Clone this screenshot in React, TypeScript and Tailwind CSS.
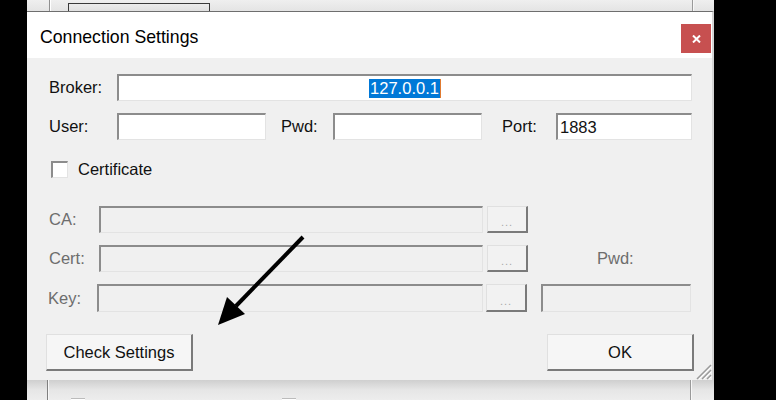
import React from 'react';

const sunken =
  'border-t-2 border-l-2 border-r border-b border-t-[#8c8c8c] border-l-[#8c8c8c] border-r-[#e3e3e3] border-b-[#e3e3e3]';
const raised =
  'border-t border-l border-r-2 border-b-2 border-t-[#e0e0e0] border-l-[#e0e0e0] border-r-[#7a7a7a] border-b-[#7a7a7a]';

function Field({ w, h = 27, disabled, children }: { w: number; h?: number; disabled?: boolean; children?: React.ReactNode }) {
  return (
    <div
      className={`${sunken} flex items-center shrink-0 ${disabled ? 'bg-[#f0f0f0]' : 'bg-white'}`}
      style={{ width: w, height: h }}
    >
      {children}
    </div>
  );
}

function Browse({ h = 27 }: { h?: number }) {
  return (
    <div className={`${raised} bg-[#f2f2f2] w-[41px] flex items-end justify-center pb-[3px] text-[11px] leading-none text-[#a8a8a8] tracking-[1px]`} style={{ height: h }}>
      ...
    </div>
  );
}

function Arrow() {
  return (
    <svg className="absolute left-0 top-0 pointer-events-none" width="776" height="400" viewBox="0 0 776 400">
      <line x1="303" y1="237" x2="236" y2="306" stroke="#000" strokeWidth="4" />
      <polygon points="218,325 227,297 245,314" fill="#000" />
    </svg>
  );
}

export default function App() {
  return (
    <div className="relative w-[776px] h-[400px] overflow-hidden bg-black flex font-['Liberation_Sans',Arial,sans-serif] text-[16.5px] text-[#111]">
      <div className="w-[27px] shrink-0" />

      <div className="w-[687px] shrink-0 flex flex-col">
        {/* window behind, top edge */}
        <div className="h-[11px] flex bg-gradient-to-b from-[#efefef] to-[#e4e4e4]">
          <div className="w-[22px]" />
          <div className="w-px bg-[#8f8f8f]" />
          <div className="w-px bg-white" />
          <div className="w-[17px]" />
          <div className="w-[142px] mt-[3px] border border-b-0 border-[#3a3a3a] bg-gradient-to-b from-[#ececec] to-[#e0e0e0]" />
          <div className="flex-1" />
          <div className="w-px bg-[#9a9a9a]" />
          <div className="w-px bg-[#f7f7f7]" />
          <div className="w-[20px]" />
        </div>

        {/* dialog */}
        <div className="h-[369px] flex flex-col border-t border-[#6e6e6e] border-r-2 border-r-[#d4d4d4] relative">
          <div className="h-[46px] bg-white flex items-start justify-between">
            <div className="pl-[13px] pt-[13px] text-[17.7px] leading-[24px] text-black">Connection Settings</div>
            <div className="mt-[12px] mr-px w-[30px] h-[29px] bg-[#c75050] flex items-center justify-center">
              <svg width="9" height="8" viewBox="0 0 9 8">
                <path d="M1 0.5 L8 7.5 M8 0.5 L1 7.5" stroke="#fff" strokeWidth="2" />
              </svg>
            </div>
          </div>

          <div className="flex-1 bg-[#f0f0f0] pl-[22px] pt-[16px] flex flex-col relative">
            {/* broker */}
            <div className="flex items-center h-[27px]">
              <div className="w-[68px]">Broker:</div>
              <Field w={575}>
                <div className="flex-1 flex justify-center">
                  <span className="bg-[#0078d7] text-white px-[1px] leading-[19px] border-r border-r-[#e07a30]">127.0.0.1</span>
                </div>
              </Field>
            </div>

            {/* user / pwd / port */}
            <div className="flex items-center h-[27px] mt-[12px]">
              <div className="w-[68px]">User:</div>
              <Field w={149} />
              <div className="w-[67px] pl-[15px]">Pwd:</div>
              <Field w={149} />
              <div className="w-[74px] pl-[20px]">Port:</div>
              <Field w={136}>
                <span className="pl-[2px]">1883</span>
              </Field>
            </div>

            {/* certificate */}
            <div className="flex items-center h-[20px] mt-[19px] pl-[2px]">
              <div className={`${sunken} bg-white w-[17px] h-[17px]`} />
              <div className="pl-[10px] pt-px">Certificate</div>
            </div>

            {/* CA */}
            <div className="flex items-center h-[27px] mt-[27px] text-[#6d6d6d]">
              <div className="w-[50px]">CA:</div>
              <Field w={384} disabled />
              <div className="w-[4px]" />
              <Browse />
            </div>

            {/* Cert */}
            <div className="flex items-center h-[27px] mt-[12px] text-[#6d6d6d]">
              <div className="w-[50px]">Cert:</div>
              <Field w={384} disabled />
              <div className="w-[4px]" />
              <Browse />
              <div className="pl-[69px]">Pwd:</div>
            </div>

            {/* Key */}
            <div className="flex items-center h-[28px] mt-[12px] text-[#6d6d6d]">
              <div className="w-[49px] -ml-px">Key:</div>
              <Field w={386} h={28} disabled />
              <div className="w-[3px]" />
              <Browse h={28} />
              <div className="w-[14px]" />
              <Field w={150} h={28} disabled />
            </div>

            {/* buttons */}
            <div className="flex items-center h-[37px] mt-[22px] -ml-[3px]">
              <div className={`${raised} bg-[#f6f6f6] w-[147px] h-[37px] flex items-center justify-center`}>Check Settings</div>
              <div className="w-[354px]" />
              <div className={`${raised} bg-[#f6f6f6] w-[147px] h-[37px] flex items-center justify-center`}>OK</div>
            </div>

            {/* resize grip */}
            <svg className="absolute right-0 bottom-0" width="19" height="19" viewBox="0 0 19 19">
              <path d="M18 4 L4 18 M18 9 L9 18 M18 14 L14 18" stroke="#9a9a9a" strokeWidth="1.5" />
              <path d="M18 6 L6 18 M18 11 L11 18 M18 16 L16 18" stroke="#ffffff" strokeWidth="1" />
            </svg>
          </div>
        </div>

        {/* window behind, below the dialog */}
        <div className="h-[20px] flex bg-gradient-to-b from-[#cfcfcf] via-[#e6e6e6] to-[#ededed]">
          <div className="w-[20px]" />
          <div className="w-px bg-[#7f7f7f]" />
          <div className="w-px bg-[#f7f7f7]" />
          <div className="w-[22px]" />
          <div className="w-[14px] mt-[18px] bg-white border-t border-[#bbb]" />
          <div className="w-[197px]" />
          <div className="w-[14px] mt-[18px] bg-white border-t border-[#bbb]" />
          <div className="flex-1" />
          <div className="w-px bg-[#9a9a9a]" />
          <div className="w-px bg-[#f7f7f7]" />
          <div className="w-[22px]" />
        </div>
      </div>

      <div className="flex-1" />
      <Arrow />
    </div>
  );
}
